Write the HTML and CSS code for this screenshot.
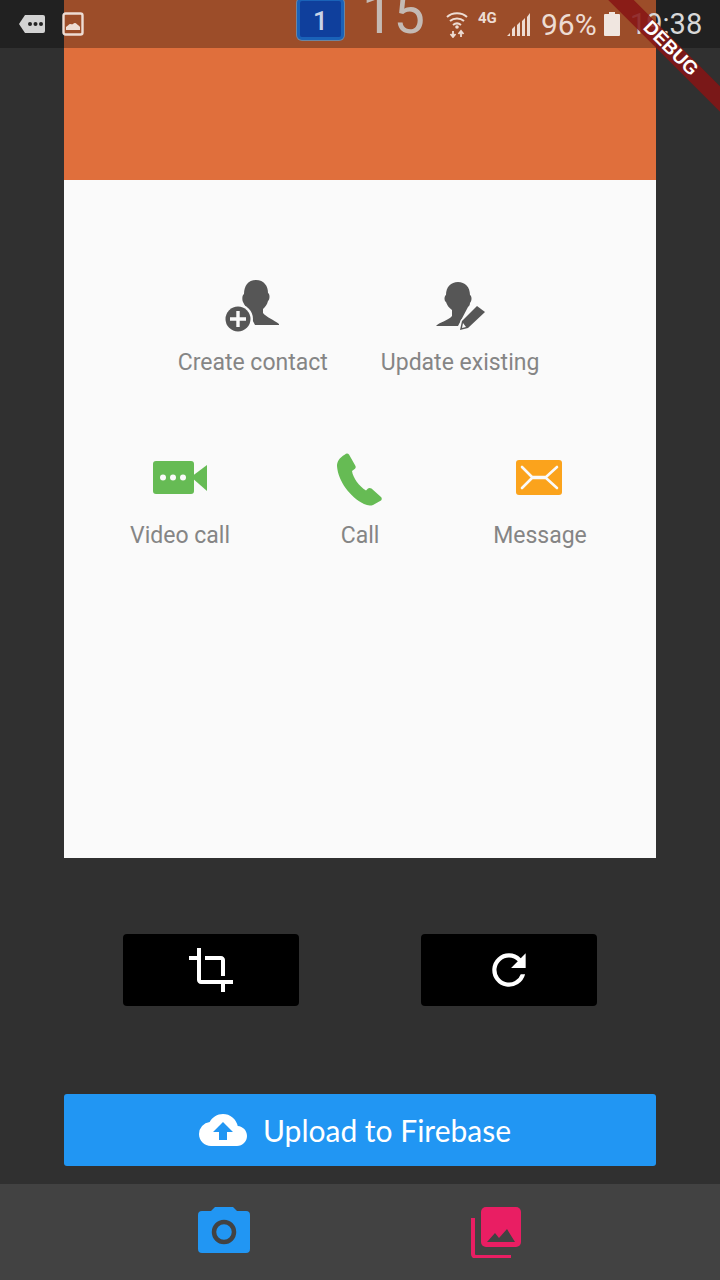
FILE: index.html
```html
<!DOCTYPE html>
<html lang="en">
<head>
    <meta charset="UTF-8">
    <meta name="viewport" content="width=device-width, initial-scale=1.0">
    <link rel="stylesheet" href="styles.css">
</head>
<body>
    <div class="status-bar">
        <svg class="st-msg" width="28" height="20" viewBox="0 0 28 20">
            <path d="M7 1h18a2 2 0 0 1 2 2v14a2 2 0 0 1-2 2H7L1 10z" fill="#d2d2d2"/>
            <circle cx="12" cy="10" r="2" fill="#222"/><circle cx="17.5" cy="10" r="2" fill="#222"/><circle cx="23" cy="10" r="2" fill="#222"/>
        </svg>
        <svg class="st-pic" width="22" height="24" viewBox="0 0 22 24">
            <rect x="1.5" y="1.5" width="19" height="21" rx="2" fill="none" stroke="#eddcd3" stroke-width="2.4"/>
            <path d="M4 18v-3c2-1 2.500-3 4.500-3 1 0 1.500.7 2.500 0 1-1.500 3-1.500 3.700 0 .7 1 2 1 3.300 3v3z" fill="#eddcd3"/>
        </svg>
        <div class="st-badge">1</div>
        <div class="st-big">15</div>
        <svg class="st-wifi" width="24" height="28" viewBox="0 0 24 28">
            <g fill="none" stroke="#eddcd3" stroke-width="2">
                <path d="M2 7c5.500-5 14.500-5 20 0"/><path d="M5 11c4-3.500 10-3.500 14 0"/><path d="M8 15c2.500-2 5.500-2 8 0"/>
            </g>
            <circle cx="12" cy="17" r="1.800" fill="#eddcd3"/>
            <path d="M8 21v6M5.500 24l2.500 3 2.500-3M16 27v-6M13.500 24l2.500-3 2.500 3" fill="none" stroke="#eddcd3" stroke-width="1.800"/>
        </svg>
        <div class="st-4g">4G</div>
        <svg class="st-signal" width="24" height="24" viewBox="0 0 24 24">
            <path d="M0 24l3-3v3zM5 24v-7l3-3v10zM10 24V13l3-3v14zM15 24V9l3-3v18zM20 24V5l3-4v23z" fill="#eddcd3"/>
        </svg>
        <div class="st-pct">96%</div>
        <svg class="st-batt" width="16" height="24" viewBox="0 0 16 24">
            <path d="M5 0h6v2h4a1 1 0 0 1 1 1v20a1 1 0 0 1-1 1H1a1 1 0 0 1-1-1V3a1 1 0 0 1 1-1h4z" fill="#f0e6e0"/>
        </svg>
        <div class="st-time">19:38</div>
    </div>

    <div class="debug-banner">DEBUG</div>

    <main class="content">
        <div class="preview">
            <div class="preview-top"></div>
            <div class="preview-sheet">
                <div class="row-contact">
                    <div class="action">
                        <svg width="56" height="54" viewBox="0 0 56 54">
                            <path d="M31 0C39 0 43 6 43 13C45 14 45 19 43 21C42 25 40 27 38 29V33C41 37 49 40 54 44L54 45H30L18 22C17 20 17 15 19 14C19 6 23 0 31 0Z" fill="#565656"/>
                            <circle cx="13" cy="39" r="15" fill="#fafafa"/>
                            <circle cx="13" cy="39" r="12.500" fill="#565656"/>
                            <path d="M13 31v16M5 39h16" stroke="#fafafa" stroke-width="3.400"/>
                        </svg>
                        <span class="label">Create contact</span>
                    </div>
                    <div class="action">
                        <svg class="icon-update" width="56" height="54" viewBox="0 0 56 54">
                            <path d="M24 2C31 2 36 7 36 15C38 16 38 21 36 23C36 25 35 26 34 27L24 46H2C5 42 14 41 18 36V30C15 28 13 25 12 22C10 21 10 16 12 15C12 7 17 2 24 2Z" fill="#565656"/>
                            <path d="M43 26L51 32L34 48L26 50L28 41Z" fill="#565656" stroke="#fafafa" stroke-width="3" paint-order="stroke"/>
                            <path d="M29 43L32 47L28 48Z" fill="#fafafa"/>
                        </svg>
                        <span class="label">Update existing</span>
                    </div>
                </div>
                <div class="row-comm">
                    <div class="action">
                        <svg width="56" height="36" viewBox="0 0 56 36">
                            <rect x="1" y="1" width="41" height="33" rx="3" fill="#66bb54"/>
                            <path d="M39 17L55 5v26z" fill="#66bb54"/>
                            <circle cx="11" cy="17.500" r="3" fill="#fafafa"/><circle cx="21" cy="17.500" r="3" fill="#fafafa"/><circle cx="31" cy="17.500" r="3" fill="#fafafa"/>
                        </svg>
                        <span class="label">Video call</span>
                    </div>
                    <div class="action">
                        <svg width="48" height="56" viewBox="0 0 48 56">
                            <path d="M9 3.500C10 2 12 2 13 3.500L19.500 15C20 16.500 19.500 17.500 18 18.500L16 20C17 27 23 35 30 39.500L32 37.500C33 36.500 34.500 37 35.500 37.500L45 46C46 47 46 48.500 45 49.500L37 54C34 55 31 54.500 28 53C14 46 2 30 1 15C1 11 3 7 9 3.500Z" fill="#66bb54"/>
                        </svg>
                        <span class="label">Call</span>
                    </div>
                    <div class="action">
                        <svg width="46" height="36" viewBox="0 0 46 36">
                            <rect x="0" y="0" width="46" height="35" rx="3" fill="#fba31c"/>
                            <path d="M6 7L16 17H30L41 7M6 28L16 18H30L41 28" fill="none" stroke="#fafafa" stroke-width="2.600" stroke-linecap="round" stroke-linejoin="round"/>
                        </svg>
                        <span class="label">Message</span>
                    </div>
                </div>
            </div>
        </div>

        <div class="tools">
            <button class="tool-btn">
                <svg width="48" height="48" viewBox="0 0 24 24" fill="#fff">
                    <path d="M17 15h2V7c0-1.100-.9-2-2-2H9v2h8v8zM7 17V1H5v4H1v2h4v10c0 1.100.9 2 2 2h10v4h2v-4h4v-2H7z"/>
                </svg>
            </button>
            <button class="tool-btn">
                <svg width="50" height="50" viewBox="0 0 24 24" fill="#fff">
                    <path d="M17.650 6.350A7.960 7.960 0 0 0 12 4a8 8 0 1 0 7.730 10h-2.080A6 6 0 1 1 12 6c1.660 0 3.140.69 4.220 1.780L13 11h7V4z"/>
                </svg>
            </button>
        </div>

        <button class="upload-btn">
            <svg width="48" height="48" viewBox="0 0 24 24">
                <path d="M19.350 10.040A7.490 7.490 0 0 0 12 4C9.110 4 6.600 5.640 5.350 8.040A5.994 5.994 0 0 0 0 14c0 3.310 2.690 6 6 6h13c2.760 0 5-2.240 5-5 0-2.640-2.050-4.780-4.650-4.960zM14 13v4h-4v-4H7l5-5 5 5h-3z" fill="#fff"/>
            </svg>
            <span>Upload to Firebase</span>
        </button>
    </main>

    <nav class="bottom-nav">
        <svg class="nav-camera" width="52" height="48" viewBox="0 0 52 48">
            <path d="M17 0h18l4 4h9a4 4 0 0 1 4 4v34a4 4 0 0 1-4 4H4a4 4 0 0 1-4-4V8a4 4 0 0 1 4-4h9z" fill="#2196f3" transform="translate(0 1)"/>
            <circle cx="26" cy="26" r="10" fill="none" stroke="#424242" stroke-width="4.500"/>
        </svg>
        <svg width="52" height="52" viewBox="0 0 52 52">
            <path d="M3 12v36a3 3 0 0 0 3 3h35" fill="none" stroke="#e91e63" stroke-width="4"/>
            <rect x="11" y="1" width="40" height="40" rx="5" fill="#e91e63"/>
            <path d="M17 36L25 27L29 32L37 23L45 36Z" fill="#424242"/>
        </svg>
    </nav>
</body>
</html>
```

FILE: styles.css
```css
* {
    box-sizing: border-box;
}

body {
    background-color: #303030;
    margin: 0;
    height: 1280px;
    width: 720px;
    overflow: hidden;
    display: flex;
    flex-direction: column;
    position: relative;
    font-family: Roboto, sans-serif;
}

/* system bar sits over the app */
.status-bar {
    position: absolute;
    top: 0;
    left: 0;
    width: 720px;
    height: 48px;
    background-color: rgba(0, 0, 0, 0.3);
    display: flex;
    align-items: center;
    overflow: hidden;
    color: #d9cdc6;
    z-index: 1;
}

.st-msg {
    margin-left: 18px;
}

.st-pic {
    margin-left: 16px;
}

.st-badge {
    width: 47px;
    height: 42px;
    margin: -10px 0 0 213px;
    background-color: #0f3f9c;
    border: 3px solid #1a62b8;
    border-radius: 5px;
    box-shadow: 0 0 0 1px #6d85a0;
    color: #c9d3e6;
    font-size: 26px;
    font-weight: 500;
    text-align: center;
    line-height: 40px;
}

.st-big {
    margin: -20px 0 0 18px;
    font-size: 56px;
    line-height: 36px;
    color: #c4bab4;
    width: 64px;
}

.st-wifi {
    margin-left: 19px;
}

.st-4g {
    margin: -12px 0 0 9px;
    font-size: 15px;
    font-weight: 700;
    color: #eddcd3;
    width: 20px;
}

.st-signal {
    margin-left: 9px;
}

.st-pct {
    margin-left: 10px;
    font-size: 30px;
    color: #eddcd3;
    width: 56px;
}

.st-batt {
    margin-left: 7px;
}

.st-time {
    margin-left: 10px;
    font-size: 29px;
    color: #d8d8d8;
}

/* see-through, the clock shows under it */
.debug-banner {
    position: absolute;
    top: 40px;
    right: -50px;
    width: 200px;
    height: 18px;
    transform: rotate(45deg);
    background-color: rgba(135, 20, 20, 0.85);
    color: #fff;
    font-family: "Liberation Sans", sans-serif;
    font-size: 19px;
    font-weight: 700;
    line-height: 15px;
    text-align: center;
    z-index: 2;
}

.content {
    flex: 1;
    padding: 0 64px;
    display: flex;
    flex-direction: column;
}

.preview-top {
    height: 180px;
    background-color: #e06f3c;
}

.preview-sheet {
    height: 678px;
    background-color: #fafafa;
    padding-top: 100px;
}

.row-contact {
    display: flex;
    justify-content: center;
    gap: 53px;
    margin-right: 3px;
}

.row-comm {
    display: grid;
    grid-template-columns: repeat(3, 180px);
    justify-content: center;
    margin-top: 72px;
}

.action {
    display: flex;
    flex-direction: column;
    align-items: center;
}

.row-contact .action svg {
    margin-bottom: 13px;
}

.row-contact .action .icon-update {
    margin-left: 4px;
}

.row-comm .action svg {
    height: 54px;
    margin-bottom: 15px;
}

.row-comm .action:nth-child(2) svg {
    height: 56px;
    margin-bottom: 13px;
}

.row-comm .action:nth-child(3) svg {
    margin-right: 2px;
}

.label {
    color: #858585;
    font-size: 23px;
    line-height: 32px;
}

.tools {
    display: flex;
    justify-content: space-between;
    padding: 0 59px;
    margin-top: 76px;
}

.tool-btn {
    width: 176px;
    height: 72px;
    padding: 0;
    background-color: #000;
    border: none;
    border-radius: 4px;
    display: flex;
    justify-content: center;
    align-items: center;
}

.upload-btn {
    height: 72px;
    margin-top: 88px;
    padding: 0 10px 0 0;
    background-color: #2196f3;
    border: none;
    border-radius: 3px;
    color: #fff;
    font-family: Lato, sans-serif;
    font-size: 30px;
    display: flex;
    justify-content: center;
    align-items: center;
    gap: 16px;
}

.bottom-nav {
    height: 96px;
    background-color: #424242;
    display: flex;
    justify-content: center;
    align-items: center;
    gap: 220px;
}

.nav-camera {
    margin-bottom: 4px;
}
```
